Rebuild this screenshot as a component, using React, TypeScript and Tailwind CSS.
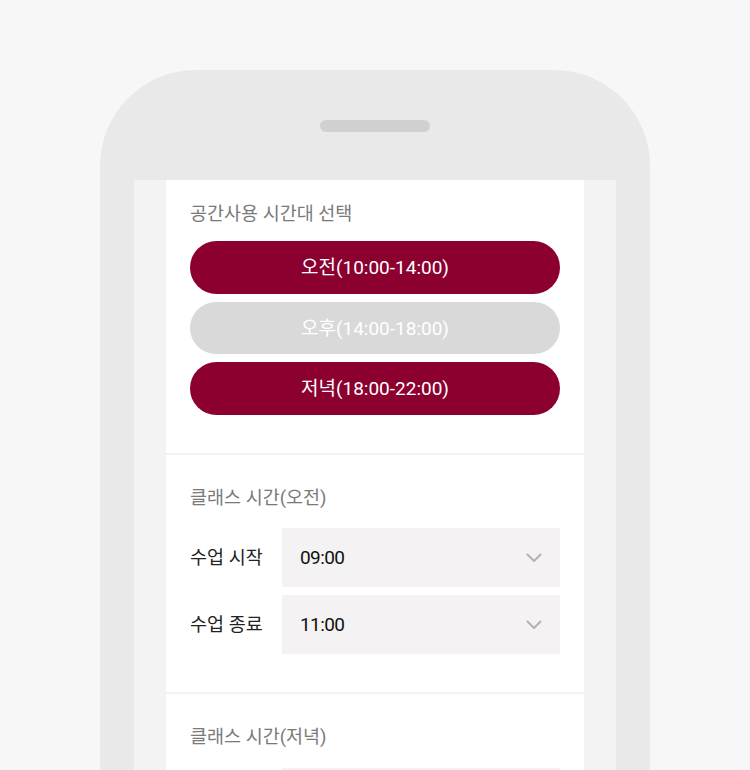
import React from 'react';

const font = { fontFamily: 'Roboto, "Noto Sans CJK KR", "Noto Sans", sans-serif' };

function Chevron() {
  return (
    <svg width="16" height="10" viewBox="0 0 16 10" fill="none" className="shrink-0">
      <path d="M1.5 1.5 L8 8 L14.5 1.5" stroke="#b3b3b3" strokeWidth="2" strokeLinecap="round" strokeLinejoin="round" />
    </svg>
  );
}

function SelectRow({ label, value }: { label: string; value: string }) {
  return (
    <div className="flex items-center">
      <div className="w-[92px] pt-[2px] text-[18.5px] text-[#222]">{label}</div>
      <div className="flex h-[59px] flex-1 items-center justify-between bg-[#f4f2f3] pl-[18px] pr-[18px]">
        <span className="pt-[2px] text-[19px] tracking-[-0.6px] text-[#111]">{value}</span>
        <Chevron />
      </div>
    </div>
  );
}

function App() {
  return (
    <div className="h-[770px] overflow-hidden bg-[#f7f7f7]" style={font}>
      <div className="flex justify-center pt-[70px]">
        <div className="h-[900px] w-[550px] rounded-t-[96px] bg-[#e9e9e9] px-[34px] pt-[50px]">
          <div className="mx-auto h-[12px] w-[110px] rounded-full bg-[#d0d0d0]" />
          <div className="mt-[48px] h-[800px] bg-[#f4f3f4] px-[32px]">
            <div className="flex flex-col gap-[2px]">
              {/* 시간대 선택 */}
              <div className="bg-white px-[24px] pb-[38.5px] pt-[21px]">
                <div className="mb-[14px] h-[26px] text-[18.5px] leading-[26px] text-[#7a7a7a]">공간사용 시간대 선택</div>
                <div className="flex flex-col gap-2">
                  <button className="h-[52.5px] rounded-full bg-[#8c0030] pt-[2px] text-[19px] text-white">오전(10:00-14:00)</button>
                  <button className="h-[52.5px] rounded-full bg-[#d9d9d9] pt-[2px] text-[19px] text-white">오후(14:00-18:00)</button>
                  <button className="h-[52.5px] rounded-full bg-[#8c0030] pt-[2px] text-[19px] text-white">저녁(18:00-22:00)</button>
                </div>
              </div>

              {/* 오전 */}
              <div className="bg-white px-[24px] pb-[38px] pt-[30px]">
                <div className="mb-[17px] h-[26px] text-[18.5px] leading-[26px] text-[#7a7a7a]">클래스 시간(오전)</div>
                <div className="flex flex-col gap-2">
                  <SelectRow label="수업 시작" value="09:00" />
                  <SelectRow label="수업 종료" value="11:00" />
                </div>
              </div>

              {/* 저녁 */}
              <div className="bg-white px-[24px] pb-[38px] pt-[30px]">
                <div className="mb-[18px] h-[26px] text-[18.5px] leading-[26px] text-[#7a7a7a]">클래스 시간(저녁)</div>
                <div className="flex flex-col gap-2">
                  <SelectRow label="수업 시작" value="18:00" />
                  <SelectRow label="수업 종료" value="20:00" />
                </div>
              </div>
            </div>
          </div>
        </div>
      </div>
    </div>
  );
}

export default App;
